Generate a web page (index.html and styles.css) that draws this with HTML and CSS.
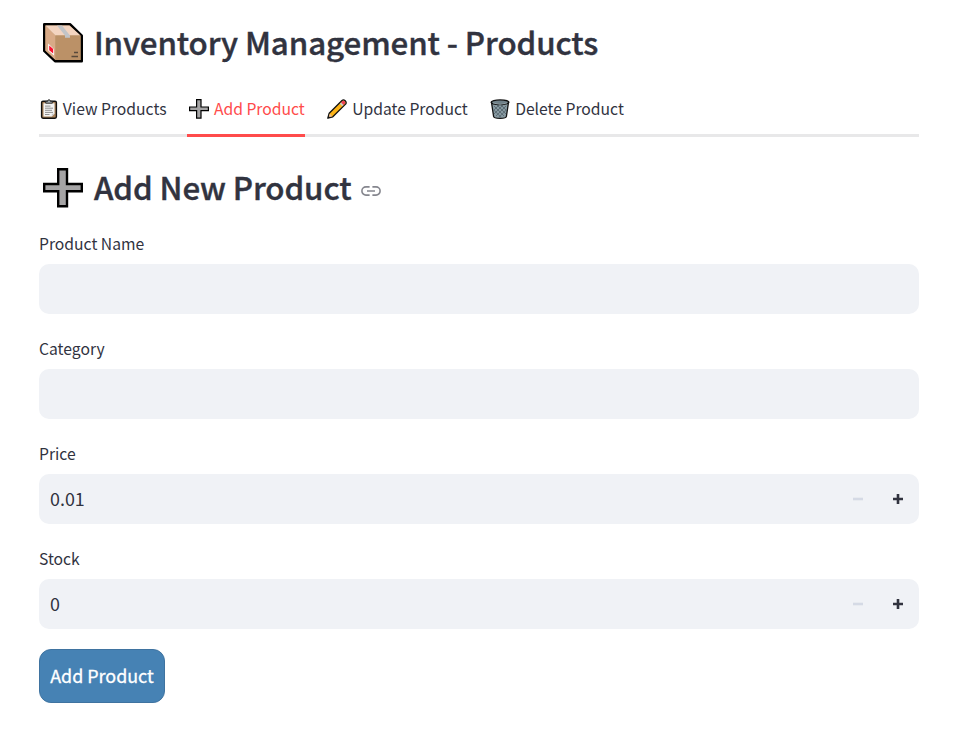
FILE: index.html
```html
<!DOCTYPE html>
<html lang="en">
<head>
<meta charset="utf-8">
<title>Inventory Management - Products</title>
<link rel="stylesheet" href="styles.css">
</head>
<body>
<svg class="defs" width="0" height="0" aria-hidden="true">
  <symbol id="plus" viewBox="0 0 40 40">
    <path d="M15.2 1.2h8.8V16H38.8v7.2H24V38.2H15.2V23.2H1.2V16H15.2z" fill="#a5a4a5" stroke="#000" stroke-width="2.4"/>
  </symbol>
</svg>
<main class="page">
  <h1 class="title">
    <svg class="title-icon" viewBox="0 0 40 40">
      <path d="M1.2 1.2H27L38.8 12.5V38.2H12L1.2 28z" fill="#b99468" stroke="#000" stroke-width="2.4" stroke-linejoin="round"/>
      <path d="M2.4 2.4 12.5 12.5v24.5L2.4 27.5z" fill="#d8aa87"/>
      <path d="M2.4 2.4h24L37.6 12.5H12.5z" fill="#f3d4c0"/>
      <path d="M12.5 12.5h25v24.5h-25z" fill="#bb9167"/>
      <path d="M14 2.4h5L27 12.5v2.2h-5v-2.2z" fill="#c2c4c7"/>
      <path d="M5.2 20.5l5.8 5.7v6.4L5.2 27.5z" fill="#fff"/>
      <path d="M6.2 22.5l4 3.4v4.6L6.2 27.2z" fill="#f8122f"/>
      <path d="M31 29.6h4M28.5 33.6h6.5" stroke="#58493b" stroke-width="1.5"/>
    </svg>
    <span class="title-text">Inventory Management - Products</span>
  </h1>

  <nav class="tabs">
    <a class="tab tab-first">
      <svg class="tab-icon" viewBox="0 0 20 20">
        <rect x="2.6" y="2.2" width="14.8" height="17" rx="1.4" fill="#a98259" stroke="#111" stroke-width="1.4"/>
        <path d="M4.5 4.3h11v10.5l-2.7 2.7H4.5z" fill="#f3f3f3"/>
        <path d="M12.8 17.5v-2.7h2.7z" fill="#c5c5c5"/>
        <path d="M6.7 4.2V2.3h2q0-1.6 1.3-1.6t1.3 1.6h2v1.9z" fill="#a8b0b5" stroke="#222" stroke-width=".9"/>
        <path d="M6 7.1h5.5M6 9.2h8M6 11.3h7M6 13.4h8M6 15.5h4.5" stroke="#777" stroke-width=".8"/>
      </svg>
      <span>View Products</span>
    </a>
    <a class="tab tab-active">
      <svg class="tab-icon" viewBox="0 0 40 40"><use href="#plus"/></svg>
      <span>Add Product</span>
    </a>
    <a class="tab">
      <svg class="tab-icon" viewBox="0 0 20 20">
        <path d="M.8 19.2 2.2 14.2 15 1.5q1.5-1.3 3.2.3t.4 3.3L5.8 17.8z" fill="#fcb316" stroke="#111" stroke-width="1.3" stroke-linejoin="round"/>
        <path d="M14 3.5 15.5 2q1.1-.8 2.2.3t.3 2.2L16.5 6z" fill="#ee4055"/>
        <path d="M12.8 4.7 14 3.5 16.5 6l-1.2 1.2z" fill="#c4cad0"/>
        <path d="M1.7 18.3 2.8 14.8 5.2 17.2z" fill="#ecc19c"/>
        <path d="M.8 19.2 1.5 16.9 3.1 18.5z" fill="#111"/>
      </svg>
      <span>Update Product</span>
    </a>
    <a class="tab">
      <svg class="tab-icon" viewBox="0 0 20 20">
        <path d="M1.5 3.3 3.6 17.5q.2 1.8 6.4 1.8t6.4-1.8L18.5 3.3z" fill="#8799a1" stroke="#111" stroke-width="1.3"/>
        <path d="M4 7l10 10M7 6l9 9M11 6l5.5 5.5M3.8 11l7 7M16 7 6 17M13 6l-9 9M9 6l-5.5 5.5M16.2 11l-7 7" stroke="#4a5a62" stroke-width=".7"/>
        <ellipse cx="10" cy="3.3" rx="8.8" ry="2.4" fill="#6f8088" stroke="#111" stroke-width="1.3"/>
        <path d="M3 4q7 2.8 14 0" fill="none" stroke="#a2b1b8" stroke-width=".8"/>
      </svg>
      <span>Delete Product</span>
    </a>
  </nav>

  <h2 class="title subtitle">
    <svg class="title-icon" viewBox="0 0 40 40"><use href="#plus"/></svg>
    <span class="title-text">Add New Product</span>
    <svg class="link-icon" viewBox="0 0 20 10">
      <path d="M8.6 .9H5a4.1 4.1 0 0 0 0 8.2h3.6M11.4 .9H15a4.1 4.1 0 0 1 0 8.2h-3.6M6 5h8" fill="none" stroke="#85868e" stroke-width="1.6"/>
    </svg>
  </h2>

  <form class="form">
    <div class="field"><label>Product Name</label><div class="input"></div></div>
    <div class="field"><label>Category</label><div class="input"></div></div>
    <div class="field">
      <label>Price</label>
      <div class="input">
        <span class="value">0.01</span>
        <svg class="step" viewBox="0 0 10 10"><path d="M0 5h10" stroke="#d5dae5" stroke-width="2.6"/></svg>
        <svg class="step" viewBox="0 0 10 10"><path d="M0 5h10M5 0v10" stroke="#31333f" stroke-width="2.6"/></svg>
      </div>
    </div>
    <div class="field">
      <label>Stock</label>
      <div class="input">
        <span class="value">0</span>
        <svg class="step" viewBox="0 0 10 10"><path d="M0 5h10" stroke="#d5dae5" stroke-width="2.6"/></svg>
        <svg class="step" viewBox="0 0 10 10"><path d="M0 5h10M5 0v10" stroke="#31333f" stroke-width="2.6"/></svg>
      </div>
    </div>
    <button class="submit" type="button">Add Product</button>
  </form>
</main>
</body>
</html>
```
FILE: styles.css
```css
* { box-sizing: border-box; }
body {
  margin: 0;
  background: #fff;
  color: #31333f;
  font-family: "Noto Sans CJK SC", "Open Sans", sans-serif;
  font-size: 15.7px;
  white-space: nowrap;
}
.defs { position: absolute; }
svg { display: block; flex: none; }
.page { width: 880px; margin-left: 39px; padding-top: 22px; }
.title {
  display: flex;
  align-items: center;
  height: 42px;
  margin: 0;
  padding-left: 4px;
  font-size: 31.3px;
  font-weight: 500;
  line-height: 42px;
}
.title-text {
  padding-bottom: 2px;
  letter-spacing: -0.1px;
  -webkit-text-stroke: 0.4px #31333f;
}
.title-icon { width: 40px; height: 40px; margin-right: 11px; }
.subtitle { margin-top: 30px; }
.link-icon { width: 20px; height: 10px; margin: 5px 0 0 10px; }
.tabs {
  display: flex;
  gap: 20px;
  height: 53px;
  margin-top: 20px;
  border-bottom: 3px solid #e8e8e9;
}
.tab {
  display: flex;
  align-items: center;
  gap: 5.4px;
  height: 53px;
  padding: 0 0 3px 2px;
  line-height: 24px;
}
.tab-first { gap: 3.8px; padding-left: 0; }
.tab-icon { width: 20px; height: 20px; }
.tab-active { color: #ff4b4b; border-bottom: 3px solid #ff4b4b; padding-bottom: 0; }
.form { margin-top: 25px; }
.field { margin-bottom: 25px; }
.field:last-of-type { margin-bottom: 20px; }
.field label { display: block; height: 30px; line-height: 20px; }
.input {
  display: flex;
  align-items: center;
  height: 50px;
  padding: 0 16px 0 11px;
  border-radius: 10px;
  background: #f0f2f6;
  font-size: 17.9px;
}
.value { margin-right: auto; padding-bottom: 2px; }
.step { width: 10px; height: 10px; margin-left: 30px; }
.submit {
  width: 126px;
  height: 54px;
  padding: 0 0 2px;
  border: 1px solid #3f73a0;
  border-radius: 12px;
  background: #4682b4;
  color: #fff;
  font: 400 17.9px/30px "Noto Sans CJK SC", "Open Sans", sans-serif;
  -webkit-text-stroke: 0.3px #fff;
}
```
